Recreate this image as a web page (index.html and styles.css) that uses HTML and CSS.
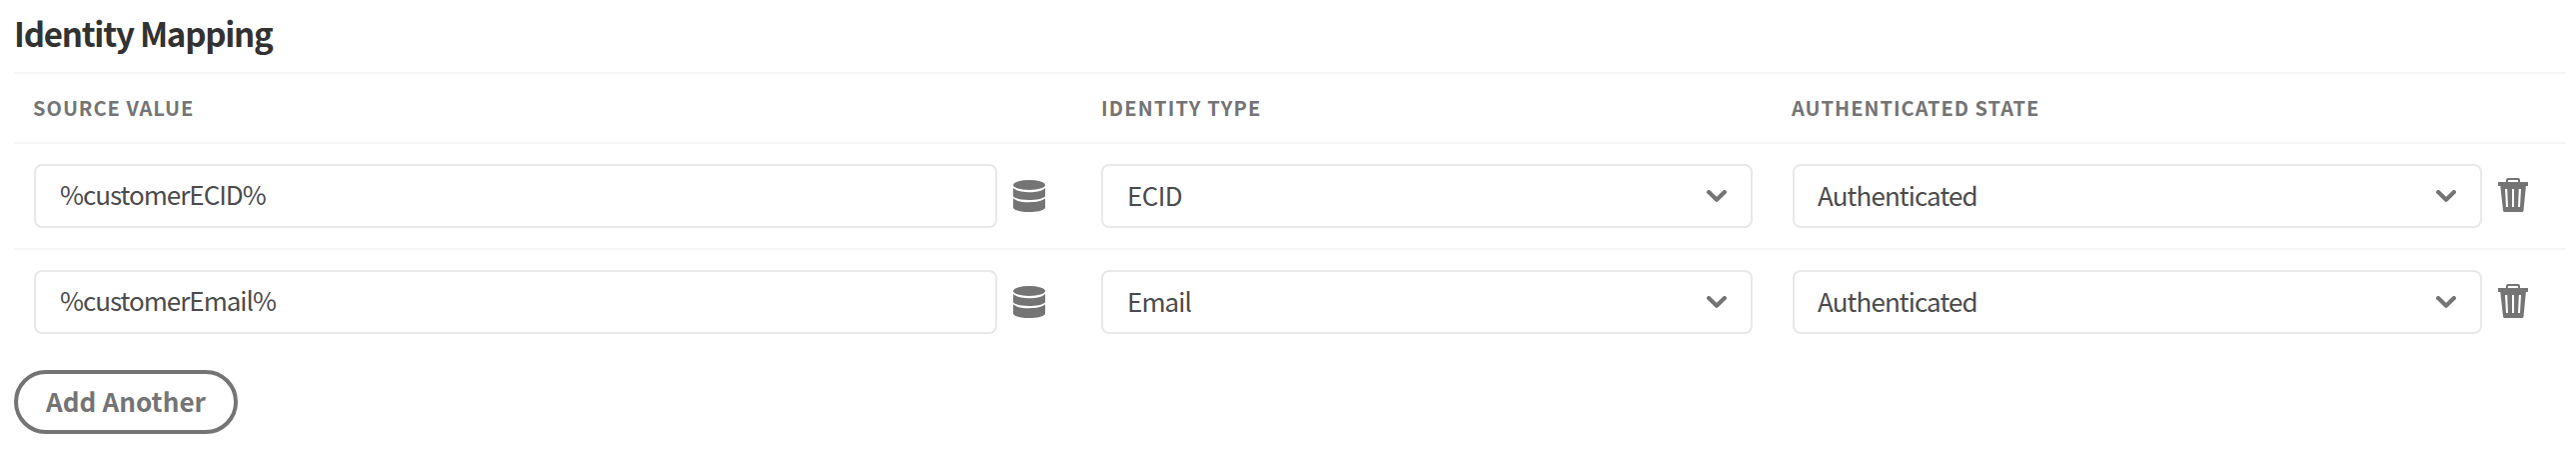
FILE: index.html
```
<!DOCTYPE html>
<html lang="en">
<head>
<meta charset="utf-8">
<title>Identity Mapping</title>
<link rel="stylesheet" href="styles.css">
</head>
<body>
<svg class="symbols" aria-hidden="true">
  <symbol id="data" viewBox="0 0 32 32">
    <ellipse cx="16" cy="5" rx="16" ry="5"/>
    <path d="M0 8C3 11 9 12.200 16 12.200S29 11 32 8V16.500C29 19 23 20 16 20S3 19 0 16.500Z"/>
    <path d="M0 18.300C3 21 9 22.200 16 22.200S29 21 32 18.300V28C30 31 23 32 16 32S2 31 0 28Z"/>
  </symbol>
  <symbol id="chevron" viewBox="0 0 20 12">
    <path d="M2.100 2.100L10 9.700L17.900 2.100" fill="none" stroke="currentColor" stroke-width="4.200" stroke-linecap="round" stroke-linejoin="round"/>
  </symbol>
  <symbol id="trash" viewBox="0 0 30 34">
    <path fill-rule="evenodd" d="M8 4V2Q8 0 10 0H20Q22 0 22 2V4H30V8H27.900L25.500 32.500Q25.300 34 24 34H6.500Q5.200 34 5 32.500L2.300 8H0V4ZM10 4H20V2H10ZM7 11L8 29H10L9.200 11ZM14 11V29H16V11ZM20.800 11L20 29H22L23 11Z"/>
  </symbol>
</svg>
<main class="mapping">
  <h1 class="title">Identity Mapping</h1>
  <div class="table">
    <div class="row head">
      <span class="head-source">Source Value</span>
      <span class="head-type">Identity Type</span>
      <span class="head-state">Authenticated State</span>
    </div>
    <div class="row">
      <div class="source"><div class="field input"><span>%customerECID%</span></div><svg class="data"><use href="#data"/></svg></div>
      <div class="field"><span class="ecid">ECID</span><svg class="chevron"><use href="#chevron"/></svg></div>
      <div class="state"><div class="field"><span>Authenticated</span><svg class="chevron"><use href="#chevron"/></svg></div><svg class="trash"><use href="#trash"/></svg></div>
    </div>
    <div class="row">
      <div class="source"><div class="field input"><span>%customerEmail%</span></div><svg class="data"><use href="#data"/></svg></div>
      <div class="field"><span>Email</span><svg class="chevron"><use href="#chevron"/></svg></div>
      <div class="state"><div class="field"><span>Authenticated</span><svg class="chevron"><use href="#chevron"/></svg></div><svg class="trash"><use href="#trash"/></svg></div>
    </div>
  </div>
  <button class="add"><span>Add Another</span></button>
</main>
</body>
</html>
```
FILE: styles.css
```
* { box-sizing: border-box; }
body {
  margin: 0;
  background: #fff;
  color: #4b4b4b;
  font-family: "Noto Sans CJK JP", "Noto Sans", sans-serif;
  font-size: 26px;
}
.symbols { display: none; }
.mapping { padding: 0 10px 0 14px; height: 454px; overflow: hidden; }
.title {
  margin: 0;
  height: 72px;
  line-height: 66px;
  font-size: 33px;
  font-weight: 700;
  letter-spacing: -1.2px;
  color: #323232;
}
.row {
  display: grid;
  grid-template-columns: 1028px 652px 736px;
  column-gap: 40px;
  height: 106px;
  padding: 20px 0 20px 20px;
  border-top: 2px solid #f4f4f4;
}
.row.head {
  grid-template-columns: 1028px 651px 736px;
  height: 70px;
  padding-top: 0;
  padding-bottom: 0;
  line-height: 68px;
  font-size: 20px;
  font-weight: 700;
  letter-spacing: 1px;
  text-transform: uppercase;
  color: #747474;
}
.head .head-type { letter-spacing: 1.2px; }
.head .head-source { margin-left: -1px; }
.source, .state { display: flex; align-items: center; }
.source .field { width: 964px; }
.state .field { width: 690px; padding-left: 23px; }
.field {
  display: flex;
  align-items: center;
  justify-content: space-between;
  height: 64px;
  padding: 0 24px;
  border: 2px solid #e8e8e8;
  border-radius: 8px;
  line-height: 60px;
  letter-spacing: -0.9px;
}
.field span { padding-bottom: 2px; }
.input { padding-bottom: 2px; letter-spacing: -1px; }
.field .ecid { letter-spacing: -0.6px; }
.field svg, .data, .trash { flex: none; fill: currentColor; color: #747474; }
.chevron { width: 20px; height: 12px; }
.data { width: 32px; height: 32px; margin-left: 16px; }
.trash { width: 30px; height: 34px; margin: 0 0 2px 16px; }
.add {
  display: flex;
  align-items: center;
  justify-content: center;
  width: 224px;
  height: 64px;
  margin-top: 16px;
  padding: 0 0 3px;
  border: 4px solid #747474;
  border-radius: 32px;
  background: transparent;
  color: #747474;
  font: 700 26px "Noto Sans CJK JP", "Noto Sans", sans-serif;
  letter-spacing: 0.1px;
}
```
